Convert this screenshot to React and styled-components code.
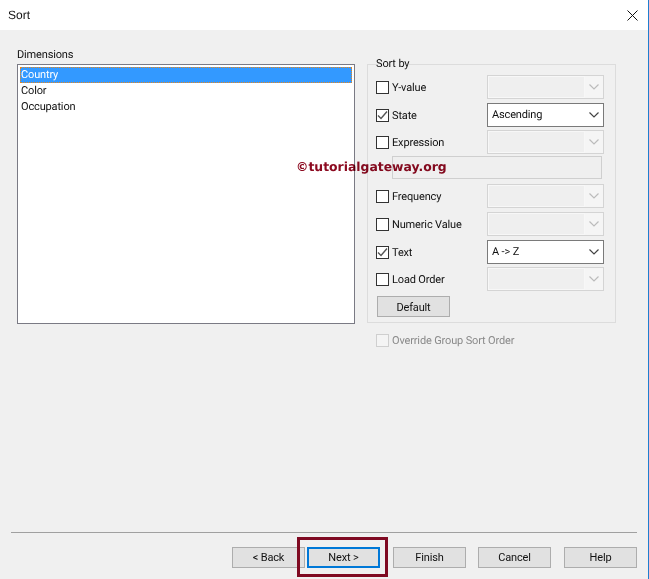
import React from 'react';
import styled, { createGlobalStyle } from 'styled-components';

const GlobalStyle = createGlobalStyle`
  html, body {
    margin: 0;
    padding: 0;
    background: #f0f0f0;
  }
  * {
    box-sizing: border-box;
  }
`;

//window
const Dialog = styled.div`
  position: relative;
  width: 649px;
  height: 579px;
  display: flex;
  flex-direction: column;
  background-color: #f0f0f0;
  border-right: 1px solid #1f7fd0;
  font-family: Roboto, 'Liberation Sans', Arial, sans-serif;
  font-size: 11px;
  letter-spacing: -0.15px;
  text-rendering: geometricPrecision;
  color: #111;
  overflow: hidden;
`;
const TitleBar = styled.div`
  height: 30px;
  flex: none;
  background-color: #fff;
  display: flex;
  align-items: center;
  justify-content: space-between;
  padding: 0 10px 0 8px;
`;
const Title = styled.span`
  font-family: 'Liberation Sans', Arial, sans-serif;
  font-size: 12px;
  letter-spacing: 0;
`;
const Content = styled.div`
  flex: 1;
  display: flex;
  padding: 18px 32px 0 17px;
  gap: 12px;
`;

//left side
const LeftColumn = styled.div`
  width: 338px;
  flex: none;
`;
const Label = styled.div`
  height: 16px;
  line-height: 14px;
`;
const ListBox = styled.ul`
  list-style-type: none;
  margin: 0;
  padding: 2px;
  height: 260px;
  background-color: #fff;
  border: 1px solid #7a7a84;
`;
const ListItem = styled.li`
  height: 16px;
  line-height: 15px;
  padding-left: 1px;
  ${props =>
    props.$selected &&
    `
    background-color: #3399ff;
    color: #fff;
    outline: 1px dotted #e8861a;
    outline-offset: -1px;
  `}
`;

//right side
const RightColumn = styled.div`
  flex: 1;
  display: flex;
  flex-direction: column;
  padding-top: 9px;
`;
const SortGroup = styled.fieldset`
  margin: 0;
  padding: 4px 11px 5px 8px;
  height: 266px;
  border: 1px solid #dcdcdc;
`;
const Legend = styled.legend`
  padding: 0;
  height: 14px;
  line-height: 13px;
`;
const Row = styled.div`
  display: flex;
  align-items: center;
  justify-content: space-between;
  height: 24px;
  margin-bottom: ${props => props.$gap}px;
`;
const CheckLabel = styled.label`
  display: flex;
  align-items: center;
  gap: 3px;
  padding-top: 1px;
  color: ${props => (props.$disabled ? '#8a8a8a' : 'inherit')};
`;
const CheckBox = styled.span`
  width: 13px;
  height: 13px;
  flex: none;
  margin-top: -1px;
  display: flex;
  align-items: center;
  justify-content: center;
  background-color: ${props => (props.$disabled ? '#f4f4f4' : '#fff')};
  border: 1px solid ${props => (props.$disabled ? '#cfcfcf' : '#333')};
`;
const Combo = styled.div`
  width: 117px;
  height: 24px;
  display: flex;
  align-items: center;
  border: 1px solid ${props => (props.$disabled ? '#d4d4d4' : '#7a7a7a')};
  background-color: ${props => (props.$disabled ? '#f5f5f5' : '#fff')};
`;
const ComboValue = styled.div`
  flex: 1;
  height: 100%;
  line-height: 19px;
  padding-left: 3px;
  background-color: ${props => (props.$disabled ? '#efefef' : 'transparent')};
  border: 1px solid ${props => (props.$disabled ? '#f7f7f7' : 'transparent')};
`;
const ComboArrow = styled.div`
  width: 18px;
  flex: none;
  display: flex;
  align-items: center;
  justify-content: center;
`;
const ExpressionInput = styled.div`
  width: 210px;
  height: 23px;
  margin: 0 0 5px 16px;
  background-color: #efefef;
  border: 1px solid #cfcfcf;
`;
const Button = styled.button`
  width: 73px;
  height: 21px;
  padding: 0;
  font: inherit;
  letter-spacing: inherit;
  color: #111;
  background-color: #e1e1e1;
  border: 1px solid #adadad;
`;
const DefaultButton = styled(Button)`
  display: block;
  margin: 5px 0 0 1px;
  padding-top: 1px;
`;
const OverrideRow = styled.div`
  margin: 10px 0 0 9px;
`;

//footer
const Footer = styled.div`
  flex: none;
  margin: 0 11px;
  height: 47px;
  border-top: 1px solid #a0a0a0;
  display: flex;
  align-items: flex-start;
  padding-top: 14px;
`;
const FooterGroup = styled.div`
  display: flex;
  gap: 2px;
  margin-left: 221px;
`;
const FooterRest = styled.div`
  display: flex;
  gap: 12px;
  margin-left: 13px;
`;
const HelpButton = styled(Button)`
  margin-left: 1px;
`;
const NextButton = styled(Button)`
  border: 2px solid #0078d7;
`;
const Highlight = styled.div`
  position: absolute;
  left: 297px;
  top: 537px;
  width: 91px;
  height: 40px;
  border: 3px solid #7f0a22;
  pointer-events: none;
`;
const Watermark = styled.div`
  position: absolute;
  left: 296px;
  top: 159px;
  font-family: 'DejaVu Sans', Verdana, sans-serif;
  font-size: 12.4px;
  font-weight: bold;
  letter-spacing: 0;
  line-height: 16px;
  color: #8c0a20;
  white-space: nowrap;
  mix-blend-mode: multiply;
`;

const CloseIcon = () => (
  <svg width="11" height="11" viewBox="0 0 11 11">
    <path d="M0.5 0.5 L10.5 10.5 M10.5 0.5 L0.5 10.5" stroke="#111" strokeWidth="1" fill="none" />
  </svg>
);
const Chevron = ({ disabled }) => (
  <svg width="10" height="6" viewBox="0 0 10 6">
    <path d="M0.5 0.5 L5 5 L9.5 0.5" stroke={disabled ? '#bcbcbc' : '#444'} strokeWidth="1.2" fill="none" />
  </svg>
);
const Tick = () => (
  <svg width="11" height="11" viewBox="0 0 11 11">
    <path d="M1 5.5 L4 8.5 L10 1.5" stroke="#555" strokeWidth="1.4" fill="none" />
  </svg>
);

const sortRows = [
  { name: 'Y-value', gap: 4 },
  { name: 'State', checked: true, value: 'Ascending', gap: 3 },
  { name: 'Expression', gap: 2, input: true },
  { name: 'Frequency', gap: 4 },
  { name: 'Numeric Value', gap: 4 },
  { name: 'Text', checked: true, value: 'A -> Z', gap: 3 },
  { name: 'Load Order', gap: 0 }
];
const dimensions = ['Country', 'Color', 'Occupation'];

export default function App() {
  return (
    <Dialog>
      <GlobalStyle />
      <TitleBar>
        <Title>Sort</Title>
        <CloseIcon />
      </TitleBar>
      <Content>
        <LeftColumn>
          <Label>Dimensions</Label>
          <ListBox>
            {dimensions.map((name, number) => (
              <ListItem key={name} $selected={number === 0}>
                {name}
              </ListItem>
            ))}
          </ListBox>
        </LeftColumn>
        <RightColumn>
          <SortGroup>
            <Legend>Sort by</Legend>
            {sortRows.map(row => (
              <React.Fragment key={row.name}>
                <Row $gap={row.gap}>
                  <CheckLabel>
                    <CheckBox>{row.checked && <Tick />}</CheckBox>
                    {row.name}
                  </CheckLabel>
                  <Combo $disabled={!row.checked}>
                    <ComboValue $disabled={!row.checked}>{row.value}</ComboValue>
                    <ComboArrow>
                      <Chevron disabled={!row.checked} />
                    </ComboArrow>
                  </Combo>
                </Row>
                {row.input && <ExpressionInput />}
              </React.Fragment>
            ))}
            <DefaultButton>Default</DefaultButton>
          </SortGroup>
          <OverrideRow>
            <CheckLabel $disabled>
              <CheckBox $disabled />
              Override Group Sort Order
            </CheckLabel>
          </OverrideRow>
        </RightColumn>
      </Content>
      <Footer>
        <FooterGroup>
          <Button>&lt; Back</Button>
          <NextButton>Next &gt;</NextButton>
        </FooterGroup>
        <FooterRest>
          <Button>Finish</Button>
          <Button>Cancel</Button>
          <HelpButton>Help</HelpButton>
        </FooterRest>
      </Footer>
      <Watermark>©tutorialgateway.org</Watermark>
      <Highlight />
    </Dialog>
  );
}
